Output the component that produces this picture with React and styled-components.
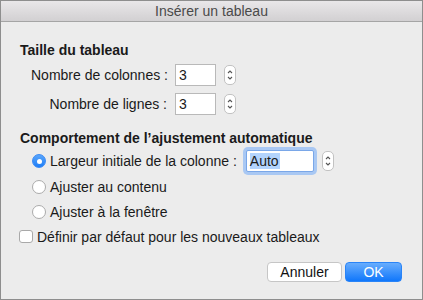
import React from 'react';
import styled, { createGlobalStyle } from 'styled-components';

const GlobalStyle = createGlobalStyle`
  html, body { margin: 0; padding: 0; background: #ececec; }
  body { font-family: "Liberation Sans", Arial, sans-serif; font-size: 14px; color: #1a1a1a; }
`;

const Window = styled.div`
  width: 423px;
  height: 300px;
  box-sizing: border-box;
  border: 1px solid #8e8e8e;
  background: #ececec;
  display: flex;
  flex-direction: column;
`;

const TitleBar = styled.div`
  height: 20px;
  flex: none;
  display: flex;
  align-items: center;
  justify-content: center;
  background: linear-gradient(#e9e7e9, #d2d0d2);
  border-bottom: 1px solid #a5a5a5;
  color: #4a4a4a;
  font-size: 14px;
`;

const Body = styled.div`
  flex: 1;
  display: flex;
  flex-direction: column;
  padding: 19px 19px 0 19px;
`;

const SectionTitle = styled.div`
  font-weight: bold;
  height: 18px;
  line-height: 18px;
  white-space: nowrap;
  margin-bottom: ${(p) => p.gap || 0}px;
`;

const FieldGrid = styled.div`
  display: grid;
  grid-template-columns: 136px 41px 12px;
  column-gap: 8px;
  row-gap: 7px;
  padding-left: 11px;
  align-items: center;
  margin-bottom: 14px;
`;

const Label = styled.div`
  text-align: right;
  white-space: nowrap;
`;

const Input = styled.div`
  width: ${(p) => p.w || 41}px;
  height: 22px;
  box-sizing: border-box;
  background: #fff;
  border: 1px solid ${(p) => (p.focus ? '#7aa7e8' : '#b9b9b9')};
  box-shadow: ${(p) => (p.focus ? '0 0 0 3px #a9c8f3' : 'none')};
  border-radius: ${(p) => (p.focus ? 2 : 0)}px;
  padding-left: 3px;
  display: flex;
  align-items: center;
  font-size: 14px;
`;

const Selected = styled.span`
  background: #b3d4fd;
  padding-right: 1px;
`;

const StepperBox = styled.div`
  width: 12px;
  height: 20px;
  box-sizing: border-box;
  border: 1px solid #c2c2c2;
  border-radius: 5px;
  background: #fff;
  display: flex;
  align-items: center;
  justify-content: center;
`;

const Stepper = () => (
  <StepperBox>
    <svg width="8" height="14" viewBox="0 0 8 14">
      <path d="M2 5 L4 3 L6 5" fill="none" stroke="#555" strokeWidth="1.1" />
      <path d="M2 9 L4 11 L6 9" fill="none" stroke="#555" strokeWidth="1.1" />
    </svg>
  </StepperBox>
);

const RadioList = styled.div`
  display: flex;
  flex-direction: column;
  padding-left: 12px;
  margin-top: 1px;
`;

const OptionRow = styled.div`
  display: flex;
  align-items: center;
  white-space: nowrap;
  height: ${(p) => p.h || 25}px;
`;

const RadioDot = styled.span`
  width: 14px;
  height: 14px;
  box-sizing: border-box;
  border-radius: 50%;
  margin-right: 4px;
  flex: none;
  display: flex;
  align-items: center;
  justify-content: center;
  background: ${(p) => (p.on ? 'linear-gradient(#5aa6fb, #1d7df7)' : '#fff')};
  border: 1px solid ${(p) => (p.on ? '#3a8af5' : '#ababab')};
  &::after {
    content: '';
    width: 5px;
    height: 5px;
    border-radius: 50%;
    background: #fff;
    display: ${(p) => (p.on ? 'block' : 'none')};
  }
`;

const InlineField = styled.div`
  display: flex;
  align-items: center;
  gap: 8px;
  margin-left: 9px;
`;

const CheckBox = styled.span`
  width: 14px;
  height: 13px;
  box-sizing: border-box;
  border: 1px solid #a9a9a9;
  border-radius: 3px;
  background: #fff;
  margin-left: -1px;
  margin-right: 4px;
  flex: none;
`;

const Footer = styled.div`
  display: flex;
  justify-content: flex-end;
  gap: 3px;
  margin-top: auto;
  padding-bottom: 17px;
  padding-right: 1px;
`;

const Button = styled.div`
  height: 20px;
  box-sizing: border-box;
  width: ${(p) => p.w}px;
  border-radius: 4px;
  display: flex;
  align-items: center;
  justify-content: center;
  font-size: 14px;
  color: ${(p) => (p.primary ? '#fff' : '#111')};
  background: ${(p) => (p.primary ? 'linear-gradient(#68adfd, #1077fb)' : '#fff')};
  border: 1px solid ${(p) => (p.primary ? '#2a84f7' : '#c6c6c6')};
`;

export default function App() {
  return (
    <>
      <GlobalStyle />
      <Window>
        <TitleBar>Insérer un tableau</TitleBar>
        <Body>
          <SectionTitle gap={5}>Taille du tableau</SectionTitle>
          <FieldGrid>
            <Label>Nombre de colonnes :</Label>
            <Input>3</Input>
            <Stepper />
            <Label>Nombre de lignes :</Label>
            <Input>3</Input>
            <Stepper />
          </FieldGrid>
          <SectionTitle>Comportement de l’ajustement automatique</SectionTitle>
          <RadioList>
            <OptionRow h={26}>
              <RadioDot on />
              Largeur initiale de la colonne :
              <InlineField>
                <Input w={68} focus>
                  <Selected>Auto</Selected>
                </Input>
                <Stepper />
              </InlineField>
            </OptionRow>
            <OptionRow>
              <RadioDot />
              Ajuster au contenu
            </OptionRow>
            <OptionRow>
              <RadioDot />
              Ajuster à la fenêtre
            </OptionRow>
          </RadioList>
          <OptionRow>
            <CheckBox />
            Définir par défaut pour les nouveaux tableaux
          </OptionRow>
          <Footer>
            <Button w={75}>Annuler</Button>
            <Button w={57} primary>OK</Button>
          </Footer>
        </Body>
      </Window>
    </>
  );
}
